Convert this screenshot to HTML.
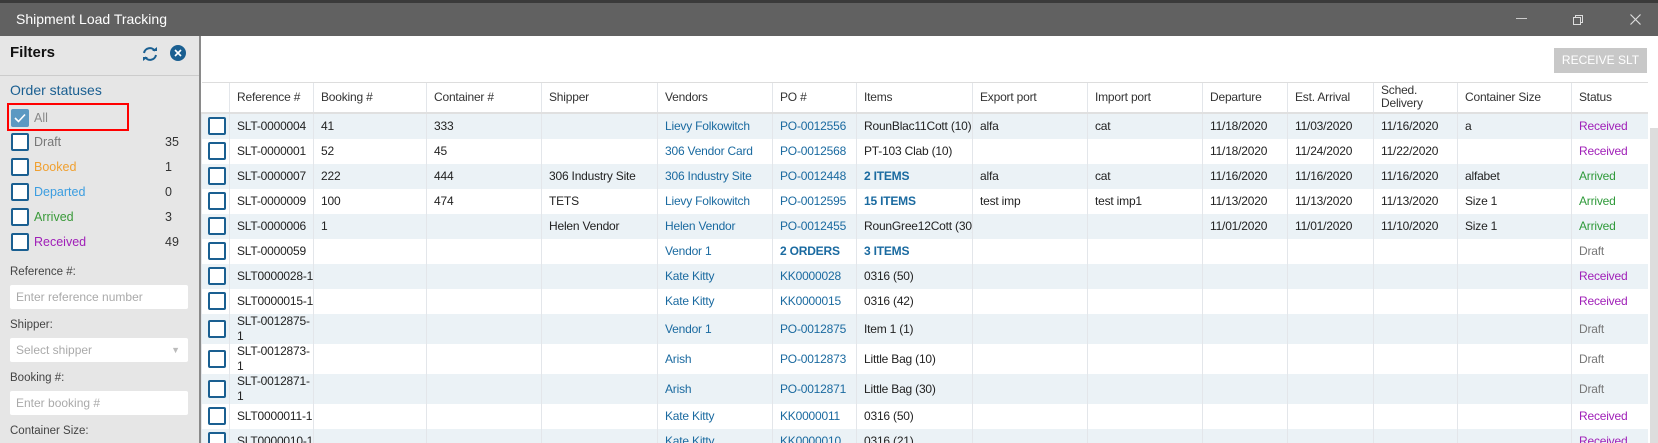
<!DOCTYPE html>
<html><head><meta charset="utf-8"><style>
*{box-sizing:border-box;margin:0;padding:0}
html,body{width:1658px;height:443px;overflow:hidden}
body{background:#fff;font-family:"Liberation Sans",sans-serif;font-size:12px;color:#222;position:relative}
.top{position:absolute;left:0;top:0;width:1658px;height:3px;background:#3a3a3a}
.title{position:absolute;left:0;top:3px;width:1658px;height:33px;background:#616161;color:#fff;font-size:14px;line-height:33px;padding-left:16px}
.side{position:absolute;left:0;top:36px;width:199px;height:407px;background:#e6e6e6}
.sep{position:absolute;left:199px;top:36px;width:2px;height:407px;background:#8a8a8a}
.abs{position:absolute}
.cb{position:absolute;width:18px;height:18px;border:2px solid #1a5f91;border-radius:2px;background:#fff}
.lbl{position:absolute;left:34px;font-size:12.5px}
.cnt{position:absolute;left:165px;font-size:12.5px;color:#333}
.inp{position:absolute;left:10px;width:178px;height:24px;background:#fff;border-radius:2px;color:#aaa;font-size:12px;line-height:24px;padding-left:6px}
.flab{position:absolute;left:10px;color:#444;font-size:11.5px}
table{position:absolute;left:201px;top:82px;border-collapse:collapse;table-layout:fixed;width:1446px}
td,th{border-left:1px solid #e3e6ea;padding:0 0 0 7px;white-space:nowrap;overflow:hidden;text-align:left;font-weight:normal;letter-spacing:-0.2px}
th{height:30px;border-top:1px solid #ddd;border-bottom:2px solid #e0e0e0;white-space:normal;color:#333;line-height:13px}
td>div{height:25px;line-height:25px;overflow:hidden}
tr.w td>div{height:30px;line-height:15px;padding-top:0}
tbody tr:nth-child(odd) td{background:#ebf2f6}
tbody tr:nth-child(even) td{background:#fff}
td.c{padding:0;position:relative}
td.c span{position:absolute;left:6px;top:50%;margin-top:-9px;width:18px;height:18px;border:2px solid #1a5f91;border-radius:2px;background:#fff}
.l{color:#1a6aa0}.b{color:#1a6aa0;font-weight:bold}
.rc{color:#a020b8}.ar{color:#2f9a3a}.dr{color:#777}
</style></head><body>
<div class="top"></div>
<div class="title">Shipment Load Tracking</div>
<div class="abs" style="left:1516px;top:18px;width:11px;height:1px;background:#ccc"></div>
<div class="abs" style="left:1575px;top:15px;width:8px;height:8px;border:1px solid #ddd"></div>
<div class="abs" style="left:1573px;top:17px;width:8px;height:8px;border:1px solid #ddd;background:#616161"></div>
<svg class="abs" style="left:1630px;top:14px" width="11" height="11" viewBox="0 0 11 11"><path d="M0.5 0.5L10.5 10.5M10.5 0.5L0.5 10.5" stroke="#ddd" stroke-width="1.2"/></svg>

<div class="side">
  <div class="abs" style="left:10px;top:8px;font-weight:bold;font-size:15px;color:#111">Filters</div>
  <svg class="abs" style="left:141px;top:10px" width="18" height="16" viewBox="0 0 18 16"><path d="M3 7a6 6 0 0 1 11-2" fill="none" stroke="#1a5f91" stroke-width="2"/><path d="M15 9a6 6 0 0 1-11 2" fill="none" stroke="#1a5f91" stroke-width="2"/><path d="M11 5h5V1z" fill="#1a5f91"/><path d="M7 11H2v4z" fill="#1a5f91"/></svg>
  <div class="abs" style="left:170px;top:9px;width:16px;height:16px;border-radius:50%;background:#1a5f91"></div>
  <svg class="abs" style="left:174px;top:13px" width="8" height="8" viewBox="0 0 8 8"><path d="M1 1L7 7M7 1L1 7" stroke="#fff" stroke-width="1.6"/></svg>
  <div class="abs" style="left:0;top:39px;width:199px;height:1px;background:#ccc"></div>
  <div class="abs" style="left:10px;top:46px;color:#1a5f91;font-size:14px">Order statuses</div>
  <div class="abs" style="left:7px;top:67px;width:122px;height:28px;border:2px solid #f00"></div>
  <div class="cb" style="left:11px;top:73px;border:none;background:#5c99c2"></div>
  <svg class="abs" style="left:14px;top:77px" width="12" height="10" viewBox="0 0 12 10"><path d="M1 5l3.5 3.5L11 1.5" fill="none" stroke="#fff" stroke-width="1.6"/></svg>
  <div class="lbl" style="top:75px;color:#888">All</div>
  <div class="cb" style="left:11px;top:97px"></div><div class="lbl" style="top:99px;color:#777">Draft</div><div class="cnt" style="top:99px">35</div>
  <div class="cb" style="left:11px;top:122px"></div><div class="lbl" style="top:124px;color:#f0a030">Booked</div><div class="cnt" style="top:124px">1</div>
  <div class="cb" style="left:11px;top:147px"></div><div class="lbl" style="top:149px;color:#3b9de0">Departed</div><div class="cnt" style="top:149px">0</div>
  <div class="cb" style="left:11px;top:172px"></div><div class="lbl" style="top:174px;color:#3a9a3a">Arrived</div><div class="cnt" style="top:174px">3</div>
  <div class="cb" style="left:11px;top:197px"></div><div class="lbl" style="top:199px;color:#a020b8">Received</div><div class="cnt" style="top:199px">49</div>
  <div class="flab" style="top:230px">Reference #:</div>
  <div class="inp" style="top:249px">Enter reference number</div>
  <div class="flab" style="top:283px">Shipper:</div>
  <div class="inp" style="top:302px">Select shipper<span style="position:absolute;right:8px;top:0;color:#bbb;font-size:9px">▼</span></div>
  <div class="flab" style="top:336px">Booking #:</div>
  <div class="inp" style="top:355px">Enter booking #</div>
  <div class="flab" style="top:389px">Container Size:</div>
</div>
<div class="sep"></div>

<div class="abs" style="left:1554px;top:48px;width:93px;height:25px;background:#c8c8c8;color:#fff;font-size:12px;line-height:25px;text-align:center">RECEIVE SLT</div>
<div class="abs" style="left:1650px;top:128px;width:8px;height:315px;background:#ddd"></div>

<table>
<colgroup><col style="width:28px"><col style="width:84px"><col style="width:113px"><col style="width:115px"><col style="width:116px"><col style="width:115px"><col style="width:84px"><col style="width:116px"><col style="width:115px"><col style="width:115px"><col style="width:85px"><col style="width:86px"><col style="width:84px"><col style="width:114px"><col style="width:76px"></colgroup>
<thead><tr><th style="border-left:none"></th><th>Reference #</th><th>Booking #</th><th>Container #</th><th>Shipper</th><th>Vendors</th><th>PO #</th><th>Items</th><th>Export port</th><th>Import port</th><th>Departure</th><th>Est. Arrival</th><th>Sched. Delivery</th><th>Container Size</th><th>Status</th></tr></thead>
<tbody>
<tr><td class="c"><span></span></td><td><div>SLT-0000004</div></td><td><div>41</div></td><td><div>333</div></td><td><div></div></td><td class="l"><div>Lievy Folkowitch</div></td><td class="l"><div>PO-0012556</div></td><td><div>RounBlac11Cott (10)</div></td><td><div>alfa</div></td><td><div>cat</div></td><td><div>11/18/2020</div></td><td><div>11/03/2020</div></td><td><div>11/16/2020</div></td><td><div>a</div></td><td class="rc"><div>Received</div></td></tr>
<tr><td class="c"><span></span></td><td><div>SLT-0000001</div></td><td><div>52</div></td><td><div>45</div></td><td><div></div></td><td class="l"><div>306 Vendor Card</div></td><td class="l"><div>PO-0012568</div></td><td><div>PT-103 Clab (10)</div></td><td><div></div></td><td><div></div></td><td><div>11/18/2020</div></td><td><div>11/24/2020</div></td><td><div>11/22/2020</div></td><td><div></div></td><td class="rc"><div>Received</div></td></tr>
<tr><td class="c"><span></span></td><td><div>SLT-0000007</div></td><td><div>222</div></td><td><div>444</div></td><td><div>306 Industry Site</div></td><td class="l"><div>306 Industry Site</div></td><td class="l"><div>PO-0012448</div></td><td class="b"><div>2 ITEMS</div></td><td><div>alfa</div></td><td><div>cat</div></td><td><div>11/16/2020</div></td><td><div>11/16/2020</div></td><td><div>11/16/2020</div></td><td><div>alfabet</div></td><td class="ar"><div>Arrived</div></td></tr>
<tr><td class="c"><span></span></td><td><div>SLT-0000009</div></td><td><div>100</div></td><td><div>474</div></td><td><div>TETS</div></td><td class="l"><div>Lievy Folkowitch</div></td><td class="l"><div>PO-0012595</div></td><td class="b"><div>15 ITEMS</div></td><td><div>test imp</div></td><td><div>test imp1</div></td><td><div>11/13/2020</div></td><td><div>11/13/2020</div></td><td><div>11/13/2020</div></td><td><div>Size 1</div></td><td class="ar"><div>Arrived</div></td></tr>
<tr><td class="c"><span></span></td><td><div>SLT-0000006</div></td><td><div>1</div></td><td><div></div></td><td><div>Helen Vendor</div></td><td class="l"><div>Helen Vendor</div></td><td class="l"><div>PO-0012455</div></td><td><div>RounGree12Cott (30)</div></td><td><div></div></td><td><div></div></td><td><div>11/01/2020</div></td><td><div>11/01/2020</div></td><td><div>11/10/2020</div></td><td><div>Size 1</div></td><td class="ar"><div>Arrived</div></td></tr>
<tr><td class="c"><span></span></td><td><div>SLT-0000059</div></td><td><div></div></td><td><div></div></td><td><div></div></td><td class="l"><div>Vendor 1</div></td><td class="b"><div>2 ORDERS</div></td><td class="b"><div>3 ITEMS</div></td><td><div></div></td><td><div></div></td><td><div></div></td><td><div></div></td><td><div></div></td><td><div></div></td><td class="dr"><div>Draft</div></td></tr>
<tr><td class="c"><span></span></td><td><div>SLT0000028-1</div></td><td><div></div></td><td><div></div></td><td><div></div></td><td class="l"><div>Kate Kitty</div></td><td class="l"><div>KK0000028</div></td><td><div>0316 (50)</div></td><td><div></div></td><td><div></div></td><td><div></div></td><td><div></div></td><td><div></div></td><td><div></div></td><td class="rc"><div>Received</div></td></tr>
<tr><td class="c"><span></span></td><td><div>SLT0000015-1</div></td><td><div></div></td><td><div></div></td><td><div></div></td><td class="l"><div>Kate Kitty</div></td><td class="l"><div>KK0000015</div></td><td><div>0316 (42)</div></td><td><div></div></td><td><div></div></td><td><div></div></td><td><div></div></td><td><div></div></td><td><div></div></td><td class="rc"><div>Received</div></td></tr>
<tr class="w"><td class="c"><span></span></td><td><div>SLT-0012875-<br>1</div></td><td><div></div></td><td><div></div></td><td><div></div></td><td class="l"><div style="line-height:30px">Vendor 1</div></td><td class="l"><div style="line-height:30px">PO-0012875</div></td><td><div style="line-height:30px">Item 1 (1)</div></td><td><div></div></td><td><div></div></td><td><div></div></td><td><div></div></td><td><div></div></td><td><div></div></td><td class="dr"><div style="line-height:30px">Draft</div></td></tr>
<tr class="w"><td class="c"><span></span></td><td><div>SLT-0012873-<br>1</div></td><td><div></div></td><td><div></div></td><td><div></div></td><td class="l"><div style="line-height:30px">Arish</div></td><td class="l"><div style="line-height:30px">PO-0012873</div></td><td><div style="line-height:30px">Little Bag (10)</div></td><td><div></div></td><td><div></div></td><td><div></div></td><td><div></div></td><td><div></div></td><td><div></div></td><td class="dr"><div style="line-height:30px">Draft</div></td></tr>
<tr class="w"><td class="c"><span></span></td><td><div>SLT-0012871-<br>1</div></td><td><div></div></td><td><div></div></td><td><div></div></td><td class="l"><div style="line-height:30px">Arish</div></td><td class="l"><div style="line-height:30px">PO-0012871</div></td><td><div style="line-height:30px">Little Bag (30)</div></td><td><div></div></td><td><div></div></td><td><div></div></td><td><div></div></td><td><div></div></td><td><div></div></td><td class="dr"><div style="line-height:30px">Draft</div></td></tr>
<tr><td class="c"><span></span></td><td><div>SLT0000011-1</div></td><td><div></div></td><td><div></div></td><td><div></div></td><td class="l"><div>Kate Kitty</div></td><td class="l"><div>KK0000011</div></td><td><div>0316 (50)</div></td><td><div></div></td><td><div></div></td><td><div></div></td><td><div></div></td><td><div></div></td><td><div></div></td><td class="rc"><div>Received</div></td></tr>
<tr><td class="c"><span></span></td><td><div>SLT0000010-1</div></td><td><div></div></td><td><div></div></td><td><div></div></td><td class="l"><div>Kate Kitty</div></td><td class="l"><div>KK0000010</div></td><td><div>0316 (21)</div></td><td><div></div></td><td><div></div></td><td><div></div></td><td><div></div></td><td><div></div></td><td><div></div></td><td class="rc"><div>Received</div></td></tr>
</tbody></table>
</body></html>
